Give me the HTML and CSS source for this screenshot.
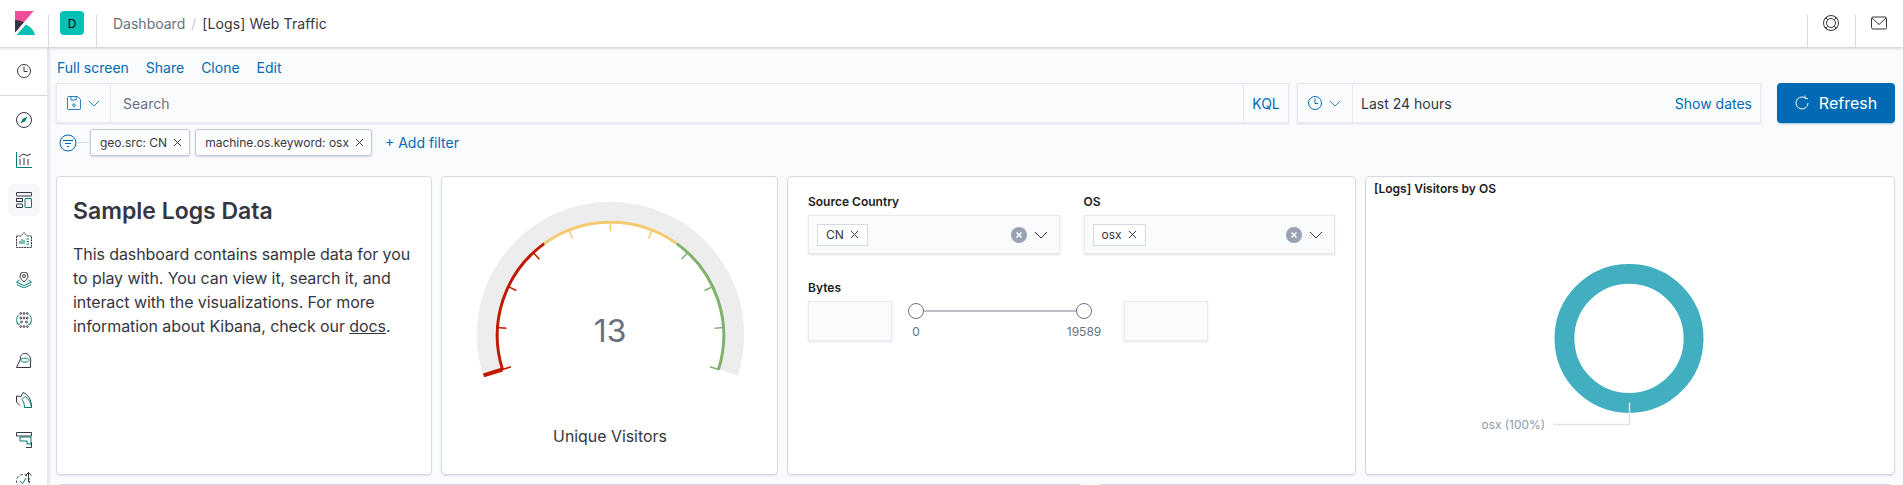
FILE: index.html
```html
<!DOCTYPE html>
<html lang="en">
<head>
    <meta charset="UTF-8">
    <meta name="viewport" content="width=device-width, initial-scale=1.0">
    <title>[Logs] Web Traffic - Kibana</title>
    <link rel="stylesheet" href="styles.css">
</head>
<body>
    <!-- Top header -->
    <header class="header">
        <div class="header-cell logo-cell">
            <svg width="24" height="24" viewBox="0 0 32 32">
                <path fill="#F04E98" d="M4 0v28.789L28.935.017z"/>
                <path fill="#343741" d="M4 12v16.789l11.906-13.738A24.721 24.721 0 0 0 4 12"/>
                <path fill="#00BFB3" d="M18.479 17.995 6.268 32h24.408c-1.079-5.73-5.595-10.817-12.197-14.005"/>
            </svg>
        </div>
        <div class="header-cell avatar-cell"><span class="avatar">D</span></div>
        <nav class="breadcrumbs">
            <span class="crumb">Dashboard</span>
            <span class="crumb-sep">/</span>
            <span class="crumb-last">[Logs] Web Traffic</span>
        </nav>
        <div class="header-cell right-cell">
            <svg class="icon" width="16" height="16" viewBox="0 0 16 16">
                <circle cx="8" cy="8" r="7.5"/><circle cx="8" cy="8" r="4.5"/>
                <path d="M2.7 2.7 4.8 4.8M13.3 2.7 11.2 4.8M2.7 13.3 4.8 11.2M13.3 13.3 11.2 11.2M1.6 4.2 4.2 1.6M11.8 1.6 14.4 4.2M1.6 11.8 4.2 14.4M11.8 14.4 14.4 11.8"/>
            </svg>
        </div>
        <div class="header-cell right-cell">
            <svg class="icon" width="16" height="16" viewBox="0 0 16 16">
                <rect x=".5" y="2" width="15" height="12" rx="1.5"/><path d="M1 3 8 9.500 15 3"/>
            </svg>
        </div>
    </header>

    <div class="layout">
        <!-- Side navigation -->
        <aside class="sidebar">
            <div class="recent">
                <svg class="icon" width="16" height="16" viewBox="0 0 16 16">
                    <circle cx="8" cy="8" r="6.5"/><path d="M8 3.5V8.5H11.5"/>
                </svg>
            </div>
            <div class="nav-list">
                <div class="nav-item">
                    <svg class="icon" width="16" height="16" viewBox="0 0 16 16">
                        <circle cx="8" cy="8" r="7.5"/><path class="teal-fill" d="M11.5 4.5 9.2 9.2 4.5 11.5 6.8 6.8z"/>
                    </svg>
                </div>
                <div class="nav-item">
                    <svg class="icon" width="16" height="16" viewBox="0 0 16 16">
                        <path class="teal" d="M.5 0V15.5H16"/>
                        <path d="M4 13V7M8 13V6M12 13V7M3 5 7 2 11 3.5 15 2"/>
                    </svg>
                </div>
                <div class="nav-item active">
                    <svg class="icon" width="16" height="16" viewBox="0 0 16 16">
                        <rect x=".5" y=".5" width="15" height="3.5" rx=".5"/>
                        <rect x=".5" y="6.5" width="6" height="3"/>
                        <rect x=".5" y="12" width="6" height="3.5" rx=".5"/>
                        <rect class="teal" x="9" y="6.5" width="6.5" height="9" rx=".5"/>
                    </svg>
                </div>
                <div class="nav-item">
                    <svg class="icon" width="16" height="16" viewBox="0 0 16 16">
                        <path d="M.5 4H5L8 .5 11 4H15.5V15.5H.5z" stroke-dasharray="2 .7"/>
                        <path class="teal" d="M4 12V9M6 12V7M8 12V8M10.5 7H13M10.5 9.5H13M10.5 12H13"/>
                    </svg>
                </div>
                <div class="nav-item">
                    <svg class="icon" width="16" height="16" viewBox="0 0 16 16">
                        <path d="M8 10C5.5 7.5 4 6 4 4a4 4 0 0 1 8 0C12 6 10.5 7.500 8 10z"/><circle cx="8" cy="4" r="1.500"/>
                        <path class="teal" d="M3.500 8 .5 10 8 13.500 15.500 10 12.500 8M1 12.500 8 16 15 12.500"/>
                    </svg>
                </div>
                <div class="nav-item">
                    <svg class="icon" width="16" height="16" viewBox="0 0 16 16">
                        <circle cx="4.700" cy="1.500" r=".9"/><circle cx="8" cy="1.500" r=".9"/><circle cx="11.300" cy="1.500" r=".9"/>
                        <circle cx="4.700" cy="6" r=".9"/><circle cx="8" cy="6" r=".9"/><circle cx="11.300" cy="6" r=".9"/>
                        <circle cx="5.500" cy="10" r=".9"/><circle cx="10.500" cy="10" r=".9"/>
                        <circle cx="4.700" cy="14.500" r=".9"/><circle cx="8" cy="14.500" r=".9"/><circle cx="11.300" cy="14.500" r=".9"/>
                        <path class="teal" d="M2.500 3C.2 5.500 0 9.500 2.500 12.500M13.500 3C15.800 5.500 16 9.500 13.500 12.500M.5 11 2.500 12.500 4 12M15.500 11 13.500 12.500 12 12"/>
                    </svg>
                </div>
                <div class="nav-item">
                    <svg class="icon" width="16" height="16" viewBox="0 0 16 16">
                        <path d="M.5 15.500H14.500V11C15 9 15 3 10 1.500 6 .8 4 4 4.500 7L.5 15.500"/>
                        <path class="teal" d="M4.500 8C7 5.500 11 5.500 13.500 8 11 11 7 11 4.500 8z"/>
                    </svg>
                </div>
                <div class="nav-item">
                    <svg class="icon" width="16" height="16" viewBox="0 0 16 16">
                        <path d="M15.500 15.500C15.500 8 12 2 7 .5L5 4.500 .5 4V10L4 13.500"/>
                        <path class="teal" d="M15.500 15.500H8.500C8.500 12 7.500 9.500 6 7.500L9 4.500C13 7 15 11 15.500 15.500z"/>
                    </svg>
                </div>
                <div class="nav-item">
                    <svg class="icon" width="16" height="16" viewBox="0 0 16 16">
                        <path d="M.5 .5H15.500V4H.5zM10 15.500H15.500V10"/>
                        <path class="teal" d="M4 5V9H11V12H15V5z"/>
                    </svg>
                </div>
                <div class="nav-item">
                    <svg class="icon" width="16" height="16" viewBox="0 0 16 16">
                        <circle cx="7" cy="9" r="6.500" stroke-dasharray="2.500 2"/>
                        <path class="teal" d="M4 9 6.500 11.500 10 6"/>
                        <path d="M12.500 10V.5M9.500 3.500 12.500 .5 15.500 3.500"/>
                    </svg>
                </div>
            </div>
        </aside>

        <main class="main">
            <div class="top-nav">
                <a>Full screen</a>
                <a>Share</a>
                <a>Clone</a>
                <a>Edit</a>
            </div>

            <div class="query-row">
                <div class="field search-field">
                    <div class="prepend">
                        <svg class="icon blue" width="14" height="14" viewBox="0 0 16 16">
                            <path d="M1.500 .5H12L15.500 4V14A1.500 1.500 0 0 1 14 15.500H2A1.500 1.500 0 0 1 .5 14V1.500z"/>
                            <path d="M4.500 .5V4.500H10.500V.5"/><circle cx="8" cy="10.500" r="1.500"/>
                        </svg>
                        <svg class="icon blue" width="12" height="7" viewBox="0 0 14 8"><path d="M1 1 7 7 13 1"/></svg>
                    </div>
                    <span class="search-text">Search</span>
                    <span class="append">KQL</span>
                </div>
                <div class="field date-field">
                    <div class="prepend date-prepend">
                        <svg class="icon blue" width="14" height="16" viewBox="0 0 14 16">
                            <circle cx="7" cy="8" r="6.500"/><path d="M7 3.500V8.500H10"/>
                        </svg>
                        <svg class="icon blue" width="12" height="7" viewBox="0 0 14 8"><path d="M1 1 7 7 13 1"/></svg>
                    </div>
                    <span class="date-text">Last 24 hours</span>
                    <a class="show-dates">Show dates</a>
                </div>
                <button class="refresh">
                    <svg class="icon white" width="14" height="16" viewBox="0 0 14 16">
                        <path d="M9.500 2.500A6 6 0 1 0 13 8M10 .5V3.500H13"/>
                    </svg>
                    Refresh
                </button>
            </div>

            <div class="filter-row">
                <svg class="icon blue" width="18" height="18" viewBox="0 0 18 18">
                    <circle cx="9" cy="9" r="8"/><path d="M4 6.500H14M6 9.500H12M7.800 12.500H10.200"/>
                </svg>
                <span class="filter-line"></span>
                <span class="filter-chip">geo.src: CN <svg class="icon" width="9" height="9" viewBox="0 0 9 9"><path d="M1 1 8 8M8 1 1 8"/></svg></span>
                <span class="filter-chip">machine.os.keyword: osx <svg class="icon" width="9" height="9" viewBox="0 0 9 9"><path d="M1 1 8 8M8 1 1 8"/></svg></span>
                <a class="add-filter">+ Add filter</a>
            </div>

            <div class="panels">
                <section class="panel text-panel">
                    <h2>Sample Logs Data</h2>
                    <p>This dashboard contains sample data for you to play with. You can view it, search it, and interact with the visualizations. For more information about Kibana, check our <u>docs</u>.</p>
                </section>

                <section class="panel">
                    <svg class="chart" viewBox="0 0 337 299">
                        <g transform="translate(169.500 159.500)">
                            <path d="M-118.700 37.400A124.500 124.500 0 1 1 118.700 37.400" fill="none" stroke="#ededed" stroke-width="20"/>
                            <path d="M-108.700 34.300A114 114 0 0 1 -66.700 -92.400" fill="none" stroke="#bf1b00" stroke-width="3"/>
                            <path d="M-66.700 -92.400A114 114 0 0 1 66.700 -92.400" fill="none" stroke="#f4ca72" stroke-width="3"/>
                            <path d="M66.700 -92.400A114 114 0 0 1 108.700 34.300" fill="none" stroke="#7eb26d" stroke-width="3"/>
                            <g class="ticks-red">
                                <line y1="-105" y2="-115" transform="rotate(-107.500)"/>
                                <line y1="-105" y2="-115" transform="rotate(-86)"/>
                                <line y1="-105" y2="-115" transform="rotate(-64.500)"/>
                                <line y1="-105" y2="-115" transform="rotate(-43)"/>
                            </g>
                            <g class="ticks-yellow">
                                <line y1="-105" y2="-115" transform="rotate(-21.500)"/>
                                <line y1="-105" y2="-115"/>
                                <line y1="-105" y2="-115" transform="rotate(21.500)"/>
                            </g>
                            <g class="ticks-green">
                                <line y1="-105" y2="-115" transform="rotate(43)"/>
                                <line y1="-105" y2="-115" transform="rotate(64.500)"/>
                                <line y1="-105" y2="-115" transform="rotate(86)"/>
                                <line y1="-105" y2="-115" transform="rotate(107.500)"/>
                            </g>
                            <line y1="-114" y2="-134" stroke="#bf1b00" stroke-width="4" transform="rotate(-107.500)"/>
                        </g>
                        <text class="gauge-value" x="169" y="166" text-anchor="middle">13</text>
                        <text class="gauge-label" x="169" y="267" text-anchor="middle">Unique Visitors</text>
                    </svg>
                </section>

                <section class="panel controls-panel">
                    <div class="control-row">
                        <div class="control">
                            <label>Source Country</label>
                            <div class="select">
                                <span class="select-chip">CN <svg class="icon" width="9" height="9" viewBox="0 0 9 9"><path d="M1 1 8 8M8 1 1 8"/></svg></span>
                                <span class="clear"><svg class="icon white" width="6" height="6" viewBox="0 0 6 6"><path d="M.5 .5 5.500 5.500M5.500 .5 .5 5.500"/></svg></span>
                                <svg class="icon" width="14" height="8" viewBox="0 0 14 8"><path d="M1 1 7 7 13 1"/></svg>
                            </div>
                        </div>
                        <div class="control">
                            <label>OS</label>
                            <div class="select">
                                <span class="select-chip">osx <svg class="icon" width="9" height="9" viewBox="0 0 9 9"><path d="M1 1 8 8M8 1 1 8"/></svg></span>
                                <span class="clear"><svg class="icon white" width="6" height="6" viewBox="0 0 6 6"><path d="M.5 .5 5.500 5.500M5.500 .5 .5 5.500"/></svg></span>
                                <svg class="icon" width="14" height="8" viewBox="0 0 14 8"><path d="M1 1 7 7 13 1"/></svg>
                            </div>
                        </div>
                    </div>
                    <div class="control bytes">
                        <label>Bytes</label>
                        <div class="range">
                            <div class="range-input"></div>
                            <div class="slider">
                                <div class="slider-end"><span class="handle"></span><span class="end-label">0</span></div>
                                <div class="track"></div>
                                <div class="slider-end"><span class="handle"></span><span class="end-label">19589</span></div>
                            </div>
                            <div class="range-input"></div>
                        </div>
                    </div>
                </section>

                <section class="panel os-panel">
                    <h3>[Logs] Visitors by OS</h3>
                    <svg class="chart" viewBox="0 0 530 299">
                        <circle cx="264" cy="162.500" r="65" fill="none" stroke="#41afc0" stroke-width="20"/>
                        <path d="M187.500 249.200H264.500V227" fill="none" stroke="#dfe2e9" stroke-width="1.500"/>
                        <text class="donut-label" x="115.500" y="254">osx (100%)</text>
                    </svg>
                </section>
            </div>

            <div class="panels-next">
                <section class="panel"></section>
                <section class="panel"></section>
            </div>
        </main>
    </div>
</body>
</html>
```

FILE: styles.css
```css
* {
    box-sizing: border-box;
}
html, body {
    height: 485px;
    overflow: hidden;
}
body {
    margin: 0;
    font-family: 'Inter', 'Liberation Sans', sans-serif;
    font-size: 14px;
    color: #343741;
    background: #fafbfd;
}
a {
    color: #006bb4;
    text-decoration: none;
}

/* icons */
.icon {
    fill: none;
    stroke: #343741;
    stroke-width: 1;
    flex: none;
    display: block;
}
.icon.blue { stroke: #006bb4; }
.icon.white { stroke: #fff; }
.icon .teal { stroke: #017d73; }
.icon .teal-fill { stroke: none; fill: #017d73; }

/* header */
.header {
    display: flex;
    height: 47px;
    background: #fff;
    box-shadow: 0 1px 3px rgba(152, 162, 179, 0.6);
    position: relative;
    z-index: 2;
}
.header-cell {
    width: 48px;
    display: flex;
    align-items: center;
    justify-content: center;
    padding-bottom: 1px;
    position: relative;
}
.logo-cell::after, .avatar-cell::after {
    content: "";
    position: absolute;
    right: -1px;
    top: 15px;
    bottom: 0;
    width: 1px;
    background: #d3dae6;
}
.right-cell::before {
    content: "";
    position: absolute;
    left: 0;
    top: 15px;
    bottom: 0;
    width: 1px;
    background: #d3dae6;
}
.avatar {
    width: 24px;
    height: 24px;
    border-radius: 4px;
    background: #00bfb3;
    color: #000;
    font-size: 12px;
    display: flex;
    align-items: center;
    justify-content: center;
}
.breadcrumbs {
    flex: 1;
    display: flex;
    align-items: center;
    gap: 6px;
    padding: 0 0 1px 17px;
}
.crumb { color: #69707d; }
.crumb-sep { color: #c6ccd6; }
.crumb-last { color: #343741; letter-spacing: 0.1px; }

/* layout */
.layout {
    display: flex;
    height: 438px;
}
.sidebar {
    width: 48px;
    flex: none;
    background: #fff;
    border-right: 1px solid #e4e8f0;
    box-shadow: 1px 0 3px rgba(152, 162, 179, 0.35);
    overflow: hidden;
    position: relative;
    z-index: 1;
}
.recent {
    height: 49px;
    border-bottom: 1px solid #d3dae6;
    display: flex;
    align-items: center;
    justify-content: center;
}
.nav-list {
    padding: 8px 7px 0 8px;
}
.nav-item {
    width: 32px;
    height: 32px;
    margin-bottom: 8px;
    border-radius: 4px;
    display: flex;
    align-items: center;
    justify-content: center;
}
.nav-item.active {
    background: #f5f7fa;
}

.main {
    flex: 1;
    min-width: 0;
    padding: 0 8px;
}
.top-nav {
    display: flex;
    gap: 17px;
    height: 36px;
    align-items: center;
    padding: 4px 0 0 1px;
}

/* query bar */
.query-row {
    display: flex;
    gap: 8px;
    height: 40px;
}
.field {
    display: flex;
    align-items: center;
    background: #fafbfd;
    border: 1px solid #e6e9f0;
    box-shadow: 0 1px 2px rgba(152, 162, 179, 0.3);
}
.search-field {
    flex: 1;
}
.date-field {
    width: 464px;
    margin-right: 8px;
}
.prepend {
    height: 100%;
    width: 54px;
    display: flex;
    align-items: center;
    gap: 7px;
    padding-left: 10px;
    border-right: 1px solid #e6e9f0;
    flex: none;
}
.date-prepend {
    width: 55px;
    padding-left: 10px;
}
.search-text {
    flex: 1;
    padding-left: 12px;
    color: #69707d;
}
.append {
    height: 100%;
    display: flex;
    align-items: center;
    width: 45px;
    justify-content: center;
    border-left: 1px solid #e6e9f0;
    color: #006bb4;
}
.date-text {
    flex: 1;
    padding-left: 8px;
}
.show-dates {
    padding-right: 8px;
}
.refresh {
    width: 118px;
    flex: none;
    border: none;
    border-radius: 4px;
    background: #006bb4;
    color: #fff;
    font-family: inherit;
    font-size: 16px;
    font-weight: 400;
    display: flex;
    align-items: center;
    justify-content: center;
    gap: 10px;
    box-shadow: 0 2px 2px -1px rgba(0, 107, 180, 0.4);
}

/* filter bar */
.filter-row {
    display: flex;
    align-items: center;
    height: 27px;
    margin-top: 6px;
    padding-left: 3px;
}
.filter-line {
    width: 11px;
    height: 1px;
    background: #d3dae6;
    margin-left: 1px;
    margin-right: 1px;
}
.filter-chip {
    height: 27px;
    display: flex;
    align-items: center;
    gap: 6px;
    padding: 0 7px 0 9px;
    margin-right: 5px;
    font-size: 12px;
    background: #fff;
    border: 1px solid #c2c9d6;
    border-radius: 3px;
    box-shadow: 0 1px 2px rgba(152, 162, 179, 0.4);
}
.add-filter {
    margin-left: 8px;
}

/* panels */
.panels {
    display: grid;
    grid-template-columns: 376px 337px 569px 530px;
    gap: 9px;
    height: 299px;
    margin-top: 20px;
}
.panel {
    background: #fff;
    border: 1px solid #d3dae6;
    border-radius: 4px;
    box-shadow: 0 2px 2px -1px rgba(152, 162, 179, 0.3);
    overflow: hidden;
    min-width: 0;
}
.chart {
    display: block;
    width: 100%;
    height: 100%;
}
.text-panel {
    padding: 18px 16px;
}
.text-panel h2 {
    margin: 0 0 15px;
    font-size: 23px;
    line-height: 32px;
    font-weight: 600;
}
.text-panel p {
    margin: 0;
    font-size: 16px;
    line-height: 24px;
    letter-spacing: -0.08px;
}
.gauge-value {
    font-family: 'Inter', sans-serif;
    font-size: 32px;
    fill: #69707d;
}
.gauge-label {
    font-family: 'Inter', sans-serif;
    font-size: 16px;
    fill: #343741;
}
.ticks-red line { stroke: #bf1b00; stroke-width: 1.500; }
.ticks-yellow line { stroke: #f4ca72; stroke-width: 1.500; }
.ticks-green line { stroke: #7eb26d; stroke-width: 1.500; }

/* controls */
.controls-panel {
    padding: 15px 20px;
}
.control-row {
    display: flex;
    gap: 24px;
}
.control {
    flex: 1;
}
.control label {
    display: block;
    height: 23px;
    font-size: 12px;
    line-height: 20px;
    font-weight: 600;
    color: #1a1c21;
}
.select {
    height: 39px;
    display: flex;
    align-items: center;
    padding: 0 11px 0 8px;
    background: #fafbfd;
    border: 1px solid #e6e9f0;
    box-shadow: 0 1px 2px rgba(152, 162, 179, 0.3);
}
.select-chip {
    height: 22px;
    display: flex;
    align-items: center;
    gap: 6px;
    padding: 0 8px;
    font-size: 12px;
    background: #fff;
    border: 1px solid #d3dae6;
    margin-right: auto;
}
.clear {
    width: 16px;
    height: 16px;
    border-radius: 50%;
    background: #98a2b3;
    display: flex;
    align-items: center;
    justify-content: center;
    margin-right: 7px;
}
.clear .icon { stroke-width: 1.500; }
.bytes {
    margin-top: 24px;
}
.range {
    display: flex;
}
.range-input {
    width: 84px;
    height: 40px;
    background: #fafbfd;
    border: 1px solid #e6e9f0;
    box-shadow: 0 1px 2px rgba(152, 162, 179, 0.3);
}
.slider {
    width: 232px;
    padding: 2px 32px 0 16px;
    display: flex;
}
.track {
    flex: 1;
    height: 2px;
    margin-top: 7px;
    background: #bcc1c9;
}
.slider-end {
    width: 16px;
    display: flex;
    flex-direction: column;
    align-items: center;
}
.handle {
    width: 16px;
    height: 16px;
    flex: none;
    border-radius: 50%;
    background: #fff;
    border: 1px solid #69707d;
}
.end-label {
    margin-top: 5px;
    font-size: 12px;
    line-height: 16px;
    color: #69707d;
    white-space: nowrap;
}

/* donut */
.os-panel {
    position: relative;
}
.os-panel h3 {
    position: absolute;
    left: 8px;
    top: 5px;
    margin: 0;
    font-size: 12px;
    line-height: 14px;
    font-weight: 600;
    color: #1a1c21;
}
.donut-label {
    font-family: 'Inter', sans-serif;
    font-size: 12px;
    fill: #8f97a6;
}

/* next row, only its top edge shows */
.panels-next {
    display: grid;
    grid-template-columns: 1027px 796px;
    gap: 14px;
    height: 60px;
    margin-top: 9px;
}
```
